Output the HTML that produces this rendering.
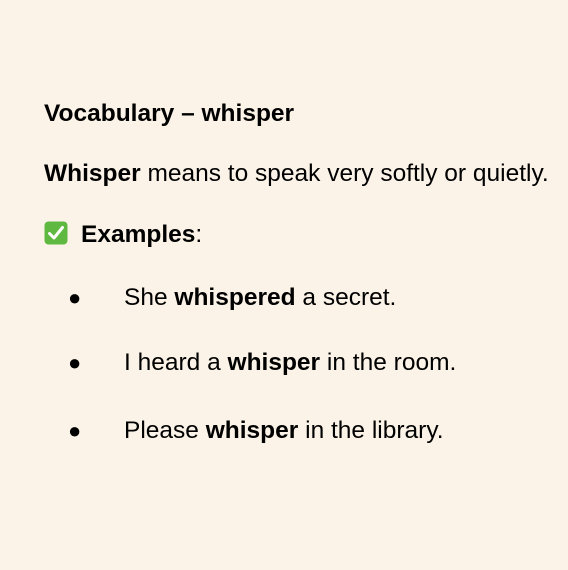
<!DOCTYPE html>
<html><head><meta charset="utf-8"><style>
body{margin:0;width:568px;height:570px;background:#fbf3e7;font-family:"Liberation Sans",Arial,sans-serif;font-size:24.5px;color:#000;position:relative;overflow:hidden}
.l{position:absolute;left:44px;white-space:nowrap;line-height:28px}
.b{position:absolute;left:68px;line-height:28px;font-size:22px}
.t{position:absolute;left:124px;line-height:28px;white-space:nowrap}
</style></head><body>
<div class="l" style="top:100px"><b>Vocabulary – whisper</b></div>
<div class="l" style="top:160px"><b>Whisper</b> means to speak very softly or quietly.</div>
<div class="l" style="top:221px"><svg width="24" height="24" viewBox="0 0 24 24" style="vertical-align:-3px;margin-right:13px"><rect x="0.5" y="0.5" width="23" height="23" rx="4" fill="#5fb840"/><path d="M5.5 12.5 L10 17 L18.5 6.5" stroke="#fff" stroke-width="3" fill="none" stroke-linecap="round" stroke-linejoin="round"/></svg><b>Examples</b>:</div>
<div class="b" style="top:284px">●</div><div class="t" style="top:284px">She <b>whispered</b> a secret.</div>
<div class="b" style="top:349px">●</div><div class="t" style="top:349px">I heard a <b>whisper</b> in the room.</div>
<div class="b" style="top:417px">●</div><div class="t" style="top:417px">Please <b>whisper</b> in the library.</div>
</body></html>
